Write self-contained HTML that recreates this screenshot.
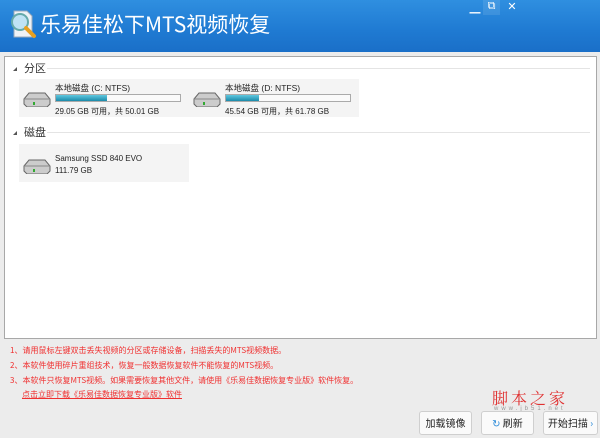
<!DOCTYPE html>
<html><head><meta charset="utf-8"><style>
*{margin:0;padding:0;box-sizing:border-box}
body{width:600px;height:438px;overflow:hidden;background:#ececec;font-family:"Liberation Sans","Noto Sans CJK SC",sans-serif;position:relative}
.title{position:absolute;left:0;top:0;width:600px;height:52px;background:linear-gradient(180deg,#2f8fe0 0%,#1f7ad2 60%,#1a6fc8 100%)}
.title .t{position:absolute;left:40px;top:11px;color:#fff;font-size:21px;line-height:26px;font-family:"Noto Sans CJK SC",sans-serif}
.win{position:absolute;top:0;color:#fff;font-size:11px;width:16px;text-align:center}
.panel{position:absolute;left:4px;top:56px;width:593px;height:283px;background:#fff;border:1px solid #a8a8a8}
.sec{position:absolute;left:8px;font-size:11px;color:#333;font-family:"Noto Sans CJK SC",sans-serif}
.sec i{display:inline-block;width:0;height:0;border-left:4px solid transparent;border-bottom:4px solid #555;margin-right:7px;vertical-align:middle}
.line{position:absolute;left:42px;right:6px;height:1px;background:#e4e4e4}
.card{position:absolute;width:170px;height:38px;background:#f4f4f4}
.card .n{position:absolute;left:36px;top:3px;font-size:8.5px;color:#222}
.card .s{position:absolute;left:36px;top:27px;font-size:8px;color:#222}
.bar{position:absolute;left:36px;top:15px;width:126px;height:8px;border:1px solid #aaa;background:#fafafa}
.bar b{display:block;height:100%;background:linear-gradient(#5fc8e0,#1b8aaa)}
.hdd{position:absolute;left:4px;top:12px}
.tips{position:absolute;left:10px;font-size:8px;color:#f03030;font-family:"Noto Sans CJK SC",sans-serif}
.btn{position:absolute;top:411px;height:24px;background:#fafafa;border:1px solid #cfcfcf;border-radius:3px;font-size:10px;color:#222;text-align:center;line-height:22px;font-family:"Noto Sans CJK SC",sans-serif}
</style></head><body>
<div class="title">
<svg style="position:absolute;left:9px;top:9px" width="28" height="30" viewBox="0 0 28 30"><path d="M5 2h13l5 5v21H5z" fill="#eef2f6" stroke="#9ab" stroke-width="1"/><circle cx="11" cy="13" r="8" fill="#bfe3f5" stroke="#6aa" stroke-width="2"/><path d="M17 19l8 8" stroke="#e8a020" stroke-width="4" stroke-linecap="round"/></svg>
<div class="t">乐易佳松下MTS视频恢复</div>
<div class="win" style="left:467px;top:0;">▁</div>
<div class="win" style="left:483px;top:0;width:17px;height:15px;background:rgba(255,255,255,.1)">⧉</div>
<div class="win" style="left:503px;top:0;width:18px">✕</div>
</div>
<div class="panel">
<div class="sec" style="top:3px"><i></i>分区</div>
<div class="line" style="top:11px"></div>
<div class="card" style="left:14px;top:22px"><svg class="hdd" width="28" height="16" viewBox="0 0 28 16"><path d="M1 8l5-6h16l5 6v5l-3 3H4l-3-3z" fill="#ccc" stroke="#666"/><path d="M1 8h26" stroke="#888"/><rect x="10" y="11" width="2" height="3" fill="#3a3"/></svg><div class="n">本地磁盘 (C: NTFS)</div><div class="bar"><b style="width:41%"></b></div><div class="s">29.05 GB 可用，共 50.01 GB</div></div>
<div class="card" style="left:184px;top:22px"><svg class="hdd" width="28" height="16" viewBox="0 0 28 16"><path d="M1 8l5-6h16l5 6v5l-3 3H4l-3-3z" fill="#ccc" stroke="#666"/><path d="M1 8h26" stroke="#888"/><rect x="10" y="11" width="2" height="3" fill="#3a3"/></svg><div class="n">本地磁盘 (D: NTFS)</div><div class="bar"><b style="width:27%"></b></div><div class="s">45.54 GB 可用，共 61.78 GB</div></div>
<div class="sec" style="top:67px"><i></i>磁盘</div>
<div class="line" style="top:75px"></div>
<div class="card" style="left:14px;top:87px"><svg class="hdd" style="top:14px" width="28" height="16" viewBox="0 0 28 16"><path d="M1 8l5-6h16l5 6v5l-3 3H4l-3-3z" fill="#ccc" stroke="#666"/><path d="M1 8h26" stroke="#888"/><rect x="10" y="11" width="2" height="3" fill="#3a3"/></svg><div class="n" style="top:10px;font-size:8px">Samsung SSD 840 EVO</div><div class="s" style="top:22px">111.79 GB</div></div>
</div>
<div class="tips" style="top:345px">1、请用鼠标左键双击丢失视频的分区或存储设备，扫描丢失的MTS视频数据。</div>
<div class="tips" style="top:360px">2、本软件使用碎片重组技术，恢复一般数据恢复软件不能恢复的MTS视频。</div>
<div class="tips" style="top:375px">3、本软件只恢复MTS视频。如果需要恢复其他文件，请使用《乐易佳数据恢复专业版》软件恢复。</div>
<div class="tips" style="top:389px;left:22px;text-decoration:underline">点击立即下载《乐易佳数据恢复专业版》软件</div>
<div style="position:absolute;left:492px;top:386px;color:#e03030;font-size:16px;font-family:'Noto Serif CJK SC',serif;letter-spacing:3px">脚本之家</div>
<div style="position:absolute;left:494px;top:406px;color:#999;font-size:6px;letter-spacing:3px">www.jb51.net</div>
<div class="btn" style="left:419px;width:53px">加载镜像</div>
<div class="btn" style="left:481px;width:53px"><span style="color:#2a8ad8">↻</span> 刷新</div>
<div class="btn" style="left:543px;width:55px">开始扫描 <span style="color:#2a8ad8">›</span></div>
</body></html>
